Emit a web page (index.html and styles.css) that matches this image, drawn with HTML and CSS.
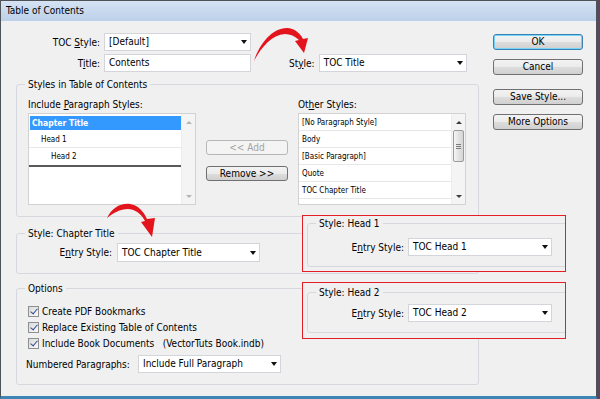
FILE: index.html
```html
<!DOCTYPE html>
<html lang="en">
<head>
  <meta charset="UTF-8" />
  <meta name="viewport" content="width=device-width, initial-scale=1.0"/>
  <title>Table of Contents</title>
  <link rel="stylesheet" href="styles.css">
</head>
<body>
  <div class="window">
    <div class="titlebar">Table of Contents</div>

    <div class="client">
      <div class="main">
        <div class="field-row">
          <span class="label">TOC <u>S</u>tyle:</span>
          <span class="select w147">[Default]</span>
        </div>
        <div class="field-row second">
          <span class="label">T<u>i</u>tle:</span>
          <span class="textbox w147">Contents</span>
          <span class="label-inline">St<u>y</u>le:</span>
          <span class="select w148">TOC Title</span>
        </div>

        <fieldset class="group styles-group">
          <legend>Styles in Table of Contents</legend>
          <div class="styles-grid">
            <span class="col-label">Include <u>P</u>aragraph Styles:</span>
            <span></span>
            <span class="col-label">Ot<u>h</u>er Styles:</span>

            <div class="listbox">
              <div class="list-items">
                <div class="item selected">Chapter Title</div>
                <div class="item level1">Head 1</div>
                <div class="item level2 last">Head 2</div>
              </div>
              <div class="scrollbar disabled">
                <span class="up"></span>
                <span class="down"></span>
              </div>
            </div>

            <div class="move-buttons">
              <span class="button disabled">&lt;&lt; Add</span>
              <span class="button">Remove &gt;&gt;</span>
            </div>

            <div class="listbox">
              <div class="list-items">
                <div class="item">[No Paragraph Style]</div>
                <div class="item">Body</div>
                <div class="item">[Basic Paragraph]</div>
                <div class="item">Quote</div>
                <div class="item">TOC Chapter Title</div>
              </div>
              <div class="scrollbar">
                <span class="up"></span>
                <span class="thumb"></span>
                <span class="down"></span>
              </div>
            </div>
          </div>
        </fieldset>

        <fieldset class="group chapter-group">
          <legend>Style: Chapter Title</legend>
          <div class="entry-row">
            <span class="label">E<u>n</u>try Style:</span>
            <span class="select w143 tall">TOC Chapter Title</span>
          </div>
        </fieldset>

        <fieldset class="group options-group">
          <legend>Options</legend>
          <div class="check-row first"><span class="checkbox"></span>Create PDF Bookmarks</div>
          <div class="check-row"><span class="checkbox"></span>Replace Existing Table of Contents</div>
          <div class="check-row"><span class="checkbox"></span>Include Book Documents&nbsp;&nbsp; (VectorTuts Book.indb)</div>
          <div class="numbered-row">
            <span class="numbered-label">Numbered Paragraphs:</span>
            <span class="select w143">Include Full Paragraph</span>
          </div>
        </fieldset>
      </div>

      <div class="side">
        <span class="button default ok">OK</span>
        <span class="button cancel">Cancel</span>
        <span class="button save">Save Style...</span>
        <span class="button more">More Options</span>
      </div>
    </div>

    <!-- annotation overlays -->
    <div class="callout head1">
      <fieldset class="group">
        <legend>Style: Head 1</legend>
        <div class="entry-row">
          <span class="label">E<u>n</u>try Style:</span>
          <span class="select w144">TOC Head 1</span>
        </div>
      </fieldset>
    </div>

    <div class="callout head2">
      <fieldset class="group">
        <legend>Style: Head 2</legend>
        <div class="entry-row">
          <span class="label">E<u>n</u>try Style:</span>
          <span class="select w144">TOC Head 2</span>
        </div>
      </fieldset>
    </div>

    <svg class="arrow arrow-title" width="62" height="40" viewBox="0 0 62 40">
      <path d="M4,37 C10,18 24,3 38,4 C45,5 50,9 53,15 L58,14 L54,29 L45,17 L49,16 C45,12 40,10 35,10 C22,11 12,22 4,37 Z" fill="#e3141b"/>
    </svg>
    <svg class="arrow arrow-chapter" width="56" height="40" viewBox="0 0 56 40">
      <path d="M3,18 C8,8 16,3 26,4 C34,5 40,12 43,19 L51,18 L48,37 L37,22 L41,21 C37,13 30,9 24,9 C16,9 9,13 3,18 Z" fill="#e3141b"/>
    </svg>
  </div>
</body>
</html>
```

FILE: styles.css
```css
* {
  box-sizing: border-box;
}

body {
  margin: 0;
  width: 600px;
  height: 399px;
  overflow: hidden;
  background: #5b4660;
  font-family: "DejaVu Sans Condensed", "DejaVu Sans", sans-serif;
  font-stretch: condensed;
  font-size: 10px;
  line-height: 13px;
  color: #000;
}

.window {
  position: relative;
  width: 597px;
  height: 399px;
  display: flex;
  flex-direction: column;
  background: #f0f0f0;
  border: 1px solid #4e5358;
  border-bottom: 3px solid #3d86b6;
}

.titlebar {
  height: 20px;
  padding-left: 5px;
  line-height: 20px;
  background: linear-gradient(#d5e3f3, #bbd0e9);
}

.client {
  flex: 1;
  display: flex;
  padding: 12px 0 0 15px;
}

.main {
  width: 463px;
}

.side {
  width: 90px;
  margin-left: 14px;
  display: flex;
  flex-direction: column;
}

/* top rows */
.field-row {
  display: flex;
  align-items: center;
  height: 18px;
}

.field-row.second {
  margin-top: 3px;
}

.label {
  flex-shrink: 0;
  width: 84px;
  margin-right: 4px;
  text-align: right;
}

.label-inline {
  margin-left: 38px;
  margin-right: 4px;
}

.select, .textbox {
  position: relative;
  display: block;
  height: 18px;
  padding-left: 4px;
  line-height: 16px;
  background: #fff;
  border: 1px solid #d3d5da;
  white-space: nowrap;
}

.select.tall {
  height: 19px;
  line-height: 17px;
}

.select::after {
  content: "";
  position: absolute;
  right: 3px;
  top: 50%;
  margin-top: -2px;
  border-left: 3.5px solid transparent;
  border-right: 3.5px solid transparent;
  border-top: 4px solid #111;
}

.w143 { width: 143px; }
.w144 { width: 144px; }
.w147 { width: 147px; }
.w148 { width: 148px; }

/* group boxes */
.group {
  margin: 0;
  min-width: 0;
  padding: 0 11px 11px;
  border: 1px solid #d5d9de;
  border-radius: 3px;
}

.group legend {
  padding: 0 3px;
  margin-left: -3px;
  line-height: 13px;
}

.styles-group {
  margin-top: 6px;
}

.styles-grid {
  display: grid;
  grid-template-columns: 168px 82px 168px;
  column-gap: 10px;
  row-gap: 2px;
  margin-top: 7px;
}

.listbox {
  display: flex;
  height: 92px;
  background: #fff;
  border: 1px solid #d2d2d2;
}

.list-items {
  flex: 1;
  overflow: hidden;
}

.item {
  height: 17px;
  padding: 2px 0 0 3px;
  line-height: 14px;
  font-size: 8px;
  white-space: nowrap;
  border-bottom: 1px solid #e7e7e7;
}

.item.selected {
  height: 14px;
  margin: 2px 0 1px 1px;
  padding: 0 0 0 2px;
  line-height: 14px;
  font-size: 8.5px;
  font-weight: bold;
  color: #fff;
  background: #3399ff;
  border-bottom: none;
}

.item.level1 { padding-left: 12px; }
.item.level2 { padding-left: 22px; }

.item.last {
  height: 19px;
  border-bottom: 2px solid #5a5a5a;
}

.scrollbar {
  width: 14px;
  display: flex;
  flex-direction: column;
  background: #f4f4f4;
  border-left: 1px solid #ececec;
}

.scrollbar .up, .scrollbar .down {
  height: 16px;
  display: flex;
  align-items: center;
  justify-content: center;
}

.scrollbar .down {
  margin-top: auto;
}

.scrollbar .up::after {
  content: "";
  border-left: 3px solid transparent;
  border-right: 3px solid transparent;
  border-bottom: 3px solid #3a3a3a;
}

.scrollbar .down::after {
  content: "";
  border-left: 3px solid transparent;
  border-right: 3px solid transparent;
  border-top: 3px solid #3a3a3a;
}

.scrollbar.disabled .up::after { border-bottom-color: #b4b4b4; }
.scrollbar.disabled .down::after { border-top-color: #b4b4b4; }

.thumb {
  height: 32px;
  margin: 0 1px;
  display: flex;
  align-items: center;
  justify-content: center;
  border: 1px solid #9b9b9b;
  border-radius: 2px;
  background: linear-gradient(90deg, #f6f6f6, #e2e2e2 50%, #d6d6d6);
}

.thumb::after {
  content: "";
  width: 5px;
  height: 5px;
  background: repeating-linear-gradient(#7c7c7c 0 1px, transparent 1px 2px);
}

.move-buttons {
  display: flex;
  flex-direction: column;
  gap: 11px;
  padding-top: 27px;
}

.move-buttons .button {
  height: 15px;
  line-height: 13px;
}

/* buttons */
.button {
  display: block;
  height: 16px;
  line-height: 14px;
  text-align: center;
  border: 1px solid #707070;
  border-radius: 3px;
  background: linear-gradient(#f3f3f3 0%, #ebebeb 50%, #dddddd 51%, #d0d0d0 100%);
  white-space: nowrap;
}

.button.disabled {
  color: #a3a3a3;
  border-color: #b5b8ba;
  background: #f4f4f4;
}

.button.default {
  border-color: #3c7fb1;
  box-shadow: inset 0 0 0 1px #74d4fb;
}

.ok { margin-top: 1px; }
.cancel { margin-top: 9px; }
.save { margin-top: 14px; }
.more { margin-top: 9px; }

/* style groups */
.chapter-group {
  margin-top: 10px;
}

.entry-row {
  display: flex;
  align-items: center;
  margin-top: 3px;
}

.chapter-group .label {
  margin-right: 5px;
}

.options-group {
  margin-top: 8px;
}

.check-row {
  display: flex;
  align-items: center;
  height: 16px;
}

.check-row.first {
  margin-top: 8px;
}

.checkbox {
  position: relative;
  width: 11px;
  height: 11px;
  margin-right: 3px;
  border: 1px solid #8e8f8f;
  background: linear-gradient(135deg, #d9d9d9, #fbfbfb);
}

.checkbox::after {
  content: "";
  position: absolute;
  left: 3px;
  top: 0;
  width: 3px;
  height: 6px;
  border: solid #34498e;
  border-width: 0 1.5px 1.5px 0;
  transform: rotate(40deg);
}

.numbered-row {
  display: flex;
  align-items: center;
  margin: 4px 0 0 -2px;
}

.numbered-label {
  width: 112px;
}

/* red annotation boxes pasted over the dialog */
.callout {
  position: absolute;
  left: 301px;
  width: 264px;
  height: 57px;
  padding-left: 4px;
  overflow: hidden;
  background: #f0f0f0;
  border: 1px solid #e41e26;
}

.callout.head1 { top: 214px; }
.callout.head2 { top: 281px; }

.callout .group {
  width: 280px;
  padding-bottom: 10px;
}

.callout.head1 .group { margin-top: 1px; }
.callout.head2 .group { margin-top: 3px; }

.callout .label {
  width: 85px;
  margin-right: 4px;
}

.callout.head1 .entry-row { margin-top: 8px; }
.callout.head2 .entry-row { margin-top: 5px; }

.arrow {
  position: absolute;
}

.arrow-title {
  left: 249px;
  top: 23px;
}

.arrow-chapter {
  left: 103px;
  top: 199px;
}
```
